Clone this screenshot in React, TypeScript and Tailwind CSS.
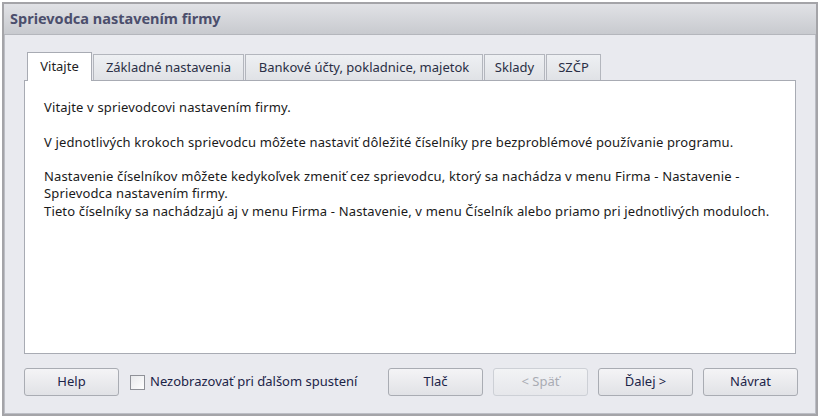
import React from "react";

const font = { fontFamily: '"Noto Sans", "Open Sans", sans-serif' };

const tabs = [
  { label: "Vitajte", w: "w-[65px]", active: true },
  { label: "Základné nastavenia", w: "w-[151px]" },
  { label: "Bankové účty, pokladnice, majetok", w: "w-[238px]" },
  { label: "Sklady", w: "w-[61px]" },
  { label: "SZČP", w: "w-[55px]" },
];

function Button({ children, disabled }: { children: React.ReactNode; disabled?: boolean }) {
  return (
    <button
      className={
        disabled
          ? "w-[95px] h-[28px] rounded-[3px] border border-[#cdd0d6] bg-gradient-to-b from-[#f2f3f5] to-[#e6e7eb] text-[13px] text-[#a9abb3]"
          : "w-[95px] h-[28px] rounded-[3px] border border-[#a9acb3] bg-gradient-to-b from-[#f4f4f6] to-[#e1e2e6] text-[13px] text-[#1c2448]"
      }
    >
      {children}
    </button>
  );
}

export default function App() {
  return (
    <div className="w-[822px] h-[420px] bg-white pl-[2px] pt-[2px]" style={font}>
      <div className="w-[816px] h-[414px] border-2 border-[#a4a4a8] flex flex-col">
        {/* Title */}
        <div className="h-[31px] shrink-0 flex items-center pl-[6px] bg-gradient-to-b from-[#e1e2e6] to-[#c8cacf] border-b border-[#b4b6bc]">
          <span className="text-[14.5px] font-bold text-[#4b4e6c]">Sprievodca nastavením firmy</span>
        </div>

        {/* Body */}
        <div className="flex-1 bg-[#e9eaef] border-x border-b border-[#bcbec5] pl-[19px] pr-[19px] pt-[17px] flex flex-col">
          {/* Tab strip */}
          <div className="flex items-end h-[28px] pl-[3px] gap-[1px]">
            {tabs.map((t) =>
              t.active ? (
                <div
                  key={t.label}
                  className={`${t.w} h-[29px] -mb-[1px] relative z-10 bg-white border border-b-0 border-[#a8abb3] flex items-center justify-center text-[13px] text-[#1e1e1e]`}
                >
                  {t.label}
                </div>
              ) : (
                <div
                  key={t.label}
                  className={`${t.w} h-[26px] bg-gradient-to-b from-[#eef0f3] to-[#e0e2e6] border border-b-0 border-[#b3b6bd] flex items-center justify-center text-[13px] text-[#2a2f45]`}
                >
                  {t.label}
                </div>
              )
            )}
          </div>

          {/* Panel */}
          <div className="w-[772px] h-[274px] bg-white border border-[#a8abb3] pl-[19px] pt-[18px] text-[13px] tracking-[0.15px] leading-[17.3px] text-[#1a1a1a] whitespace-pre-line">
            {`Vitajte v sprievodcovi nastavením firmy.

V jednotlivých krokoch sprievodcu môžete nastaviť dôležité číselníky pre bezproblémové používanie programu.

Nastavenie číselníkov môžete kedykoľvek zmeniť cez sprievodcu, ktorý sa nachádza v menu Firma - Nastavenie -
Sprievodca nastavením firmy.
Tieto číselníky sa nachádzajú aj v menu Firma - Nastavenie, v menu Číselník alebo priamo pri jednotlivých moduloch.`}
          </div>

          {/* Buttons */}
          <div className="flex items-center mt-[14px]">
            <Button>Help</Button>
            <label className="flex items-center ml-[11px] gap-[5px] text-[13px] text-[#1c2448]">
              <span className="w-[15px] h-[15px] border border-[#8f9198] bg-gradient-to-br from-[#e8e9ec] to-white" />
              Nezobrazovať pri ďalšom spustení
            </label>
            <div className="ml-auto flex gap-[10px] -mr-[2px]">
              <Button>Tlač</Button>
              <Button disabled>&lt; Späť</Button>
              <Button>Ďalej &gt;</Button>
              <Button>Návrat</Button>
            </div>
          </div>
        </div>
      </div>
    </div>
  );
}
